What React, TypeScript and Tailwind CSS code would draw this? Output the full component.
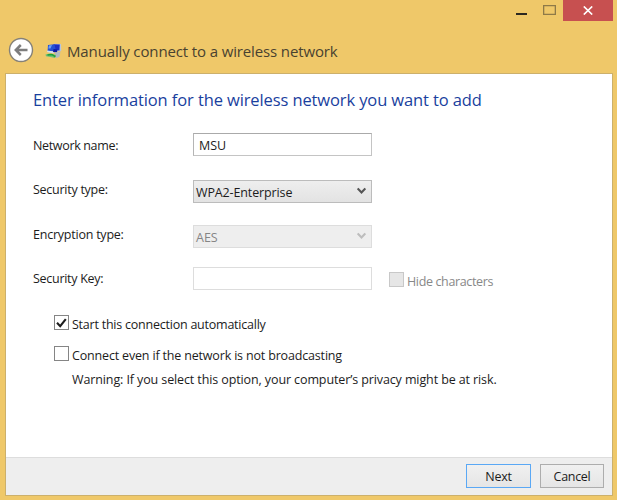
import type { ReactNode } from "react";

function Label({ children, className = "" }: { children: ReactNode; className?: string }) {
  return <span className={`whitespace-nowrap ${className}`}>{children}</span>;
}

function Chevron({ color }: { color: string }) {
  return (
    <svg width="9" height="8" viewBox="0 0 9 8" className="-mt-px shrink-0">
      <path d="M0.7 1.4 L4.5 5.4 L8.3 1.4" fill="none" stroke={color} strokeWidth="2.1" />
    </svg>
  );
}

function TitleBar() {
  return (
    <div className="flex h-[22px] justify-end pr-[4px]">
      <div className="mr-[16px] mt-[13px] h-[2px] w-[11px] bg-[#2b2820]" />
      <div className="mr-[7px] mt-[5px] h-[10px] w-[13px] border border-[#8e7a48] shadow-[inset_0_0_0_0.3px_#8e7a48]" />
      <div className="flex h-[21px] w-[50px] items-center justify-center bg-[#c75050]">
        <svg width="10" height="9" viewBox="0 0 10 9" className="-ml-px">
          <path d="M0.8 0.5 L9.2 8.5 M9.2 0.5 L0.8 8.5" stroke="#fff" strokeWidth="1.7" />
        </svg>
      </div>
    </div>
  );
}

function NetworkIcon() {
  return (
    <svg width="17" height="16" viewBox="0 0 17 16" className="shrink-0">
      <path d="M9 0.8 L16 1 L16.2 8 L10 9Z" fill="#b4c4de" />
      <path d="M8.5 1.2 L14.8 1.4 L14.4 7.4 L9 7Z" fill="#1c2fc4" />
      <path d="M3 2 L9.5 1.2 L11 8.5 L2.6 8Z" fill="#2450d4" />
      <path d="M4 2.4 L7 2 L5.5 5.6 L3.3 5.4Z" fill="#6ea2f4" />
      <path d="M2.4 7.6 L9 8.6 L8.4 10.4 L2 9Z" fill="#d4e0ec" />
      <path d="M8.6 6 L12.5 6.6 L12 9.4 L8 9Z" fill="#0e1aa0" />
      <path d="M9.5 9.6 L15.5 8.4 L14.4 14 L11 15Z" fill="#b0b9bf" />
      <path d="M0.5 11.6 L5 10.6 L11 12 L10 15 L5.5 14 L1 13.2Z" fill="#6cbd78" />
      <path d="M2.5 12 L7 11.6 L10.4 13.6" stroke="#1fa036" strokeWidth="1.5" fill="none" />
    </svg>
  );
}

function Header() {
  return (
    <div className="flex h-[51px] items-start pl-[8px]">
      <svg width="26" height="26" viewBox="0 0 26 26" className="mt-[15px] shrink-0">
        <circle cx="13" cy="13" r="11.5" fill="#fff" stroke="#858178" strokeWidth="1.4" />
        <path d="M19.5 13 H8.5 M12.8 8 L7.8 13 L12.8 18" fill="none" stroke="#7d7d7d" strokeWidth="2.5" />
      </svg>
      <div className="ml-[11px] mt-[21px]">
        <NetworkIcon />
      </div>
      <Label className="ml-[5px] mt-[19px] text-[15px] leading-[20px] tracking-[-0.13px] text-[#494230]">
        Manually connect to a wireless network
      </Label>
    </div>
  );
}

function CheckBox({ checked = false, disabled = false }: { checked?: boolean; disabled?: boolean }) {
  return (
    <div
      className={`flex h-[15px] w-[15px] shrink-0 items-center justify-center border ${
        disabled ? "border-[#c8c8c8] bg-[#e6e6e6]" : "border-[#858585] bg-white"
      }`}
    >
      {checked && (
        <svg width="11" height="10" viewBox="0 0 11 10">
          <path d="M1 4.8 L4.2 8.2 L9.8 1.2" fill="none" stroke="#1d1d1d" strokeWidth="2.1" />
        </svg>
      )}
    </div>
  );
}

export default function App() {
  return (
    <div className="flex h-[500px] w-[617px] flex-col overflow-hidden bg-[#efc869] font-['Open_Sans','Noto_Sans',sans-serif] text-[12.5px] leading-[20px] text-[#1c1c1c]">
      <TitleBar />
      <Header />
      <div className="ml-[5px] mr-[4px] flex h-[423px] shrink-0 flex-col border border-[#ccb06b] bg-white">
        <div className="h-[383px] pl-[27px]">
          <h1 className="h-[59px] whitespace-nowrap pt-[14px] text-[16.5px] leading-[24px] text-[#1a3f9e]">
            <Label className="tracking-[-0.11px]">Enter information for the wireless network you want to add</Label>
          </h1>
          <div className="flex h-[47px] items-start">
            <div className="w-[160px] pt-[3px]">
              <Label className="tracking-[-0.34px]">Network name:</Label>
            </div>
            <div className="flex h-[23px] w-[179px] items-center border border-[#c4c4c4] border-t-[#aaa] border-l-[#b5b5b5] pl-[5px]">
              <Label className="pt-[2px]">MSU</Label>
            </div>
          </div>
          <div className="flex h-[45px] items-start">
            <div className="w-[160px]">
              <Label className="tracking-[-0.26px]">Security type:</Label>
            </div>
            <div className="flex h-[23px] w-[179px] items-center justify-between border border-[#bcbcbc] bg-linear-to-b from-[#eeeeee] to-[#e3e3e3] pl-[2px] pr-[5px]">
              <Label className="pt-[3px] tracking-[-0.13px]">WPA2-Enterprise</Label>
              <Chevron color="#555555" />
            </div>
          </div>
          <div className="flex h-[42px] items-start">
            <div className="w-[160px]">
              <Label className="tracking-[-0.23px]">Encryption type:</Label>
            </div>
            <div className="flex h-[23px] w-[179px] items-center justify-between border border-[#dddddd] bg-[#eeeeee] pl-[2px] pr-[5px] text-[#858585]">
              <Label className="pt-[3px]">AES</Label>
              <Chevron color="#bdbdbd" />
            </div>
          </div>
          <div className="flex h-[48px] items-start">
            <div className="w-[160px] pt-[2px]">
              <Label className="tracking-[-0.28px]">Security Key:</Label>
            </div>
            <div className="h-[23px] w-[179px] border border-[#dddddd]" />
            <div className="ml-[17px] mt-[5px] flex items-start gap-[3px] text-[#888888]">
              <CheckBox disabled />
              <Label className="tracking-[-0.36px]">Hide characters</Label>
            </div>
          </div>
          <div className="flex h-[31px] items-start gap-[3px] pl-[21px]">
            <CheckBox checked />
            <Label className="tracking-[-0.23px]">Start this connection automatically</Label>
          </div>
          <div className="flex h-[24px] items-start gap-[3px] pl-[21px]">
            <CheckBox />
            <Label className="tracking-[-0.17px]">Connect even if the network is not broadcasting</Label>
          </div>
          <div className="pl-[39px]">
            <Label className="tracking-[-0.11px]">Warning: If you select this option, your computer’s privacy might be at risk.</Label>
          </div>
        </div>
        <div className="flex flex-1 items-start justify-end gap-[9px] border-t border-[#dddddd] bg-[#eeeeee] pr-[8px] pt-[6px]">
          <button className="h-[24px] w-[65px] border border-[#5aa8f5] bg-linear-to-b from-[#f0f0f0] to-[#e5e5e5] pt-[2px]">
            <Label className="tracking-[-0.2px]">Next</Label>
          </button>
          <button className="h-[24px] w-[64px] border border-[#adadad] bg-linear-to-b from-[#f0f0f0] to-[#e5e5e5] pt-[2px]">
            <Label className="tracking-[-0.3px]">Cancel</Label>
          </button>
        </div>
      </div>
    </div>
  );
}
